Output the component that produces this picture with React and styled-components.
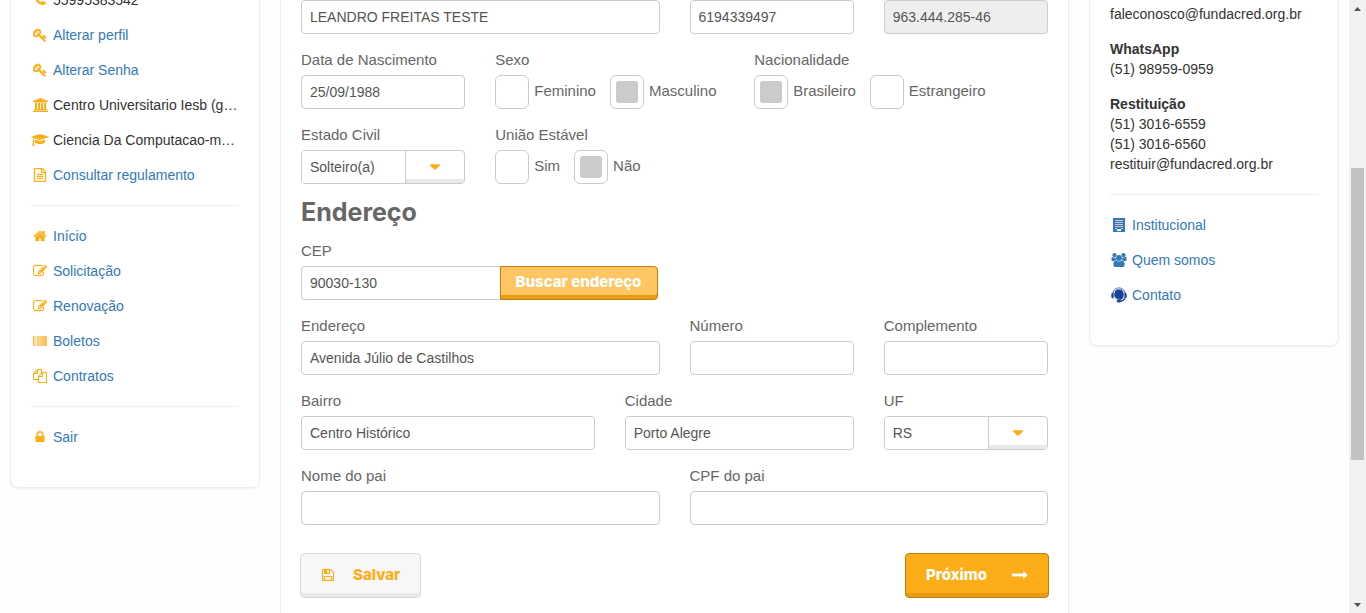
import React from "react";
import styled, { createGlobalStyle, css } from "styled-components";

const GlobalStyle = createGlobalStyle`
  * { box-sizing: border-box; }
  body {
    margin: 0;
    background: #fefefe;
    color: #333;
    font: 14px/20px "Liberation Sans", Arial, sans-serif;
  }
`;

const orange = "#fdad18";
const blue = "#337ab7";

/* ---------- page frame ---------- */
const Frame = styled.div`
  display: flex;
  height: 100vh;
  overflow: hidden;
`;

const Columns = styled.div`
  flex: 1;
  min-width: 0;
  display: grid;
  grid-template-columns: 250px minmax(0, 1fr) 250px;
  gap: 20px;
  align-items: start;
  padding: 0 10px;
`;

const Card = styled.section`
  background: #fff;
  border: 1px solid #eee;
  border-top: 0;
  border-radius: 0 0 8px 8px;
  box-shadow: 0 1px 2px rgba(0, 0, 0, 0.06);
  padding: 0 20px 33px;
`;

const Sidebar = styled(Card).attrs({ as: "aside" })`
  margin-top: -18px;
`;

const ContactCard = styled(Card).attrs({ as: "aside" })`
  padding-top: 4px;
`;

const FormCard = styled(Card).attrs({ as: "main" })`
  min-height: 100vh;
  padding-bottom: 40px;
`;

/* ---------- side menus ---------- */
const Menu = styled.ul`
  list-style: none;
  margin: 0;
  padding: 0;
`;

const MenuItem = styled.li`
  display: flex;
  align-items: center;
  gap: 4px;
  height: 35px;
`;

const IconSlot = styled.span`
  flex: none;
  display: flex;
  justify-content: center;
  width: 18px;
  color: ${(p) => p.$color || orange};
`;

const MenuText = styled.span`
  overflow: hidden;
  text-overflow: ellipsis;
  white-space: nowrap;
`;

const MenuLink = styled.a`
  color: ${blue};
  text-decoration: none;
  white-space: nowrap;
`;

const Divider = styled.hr`
  border: 0;
  border-top: 1px solid #eee;
  margin: ${(p) => p.$top || 13}px 0 12px;
`;

const ContactBlock = styled.address`
  display: flex;
  flex-direction: column;
  font-style: normal;
  & + & { margin-top: 15px; }
`;

/* ---------- form ---------- */
const Grid = styled.div`
  display: grid;
  grid-template-columns: repeat(12, minmax(0, 1fr));
  column-gap: 30px;
  row-gap: 16px;
`;

const Field = styled.div`
  grid-column: auto / span ${(p) => p.$span};
  display: flex;
  flex-direction: column;
  gap: 5px;
  min-width: 0;
`;

const labelText = css`
  color: #666;
  font-size: 15px;
  line-height: 20px;
  white-space: nowrap;
`;

const Label = styled.label`
  ${labelText}
`;

const GroupLabel = styled.span`
  ${labelText}
`;

const Input = styled.input`
  width: 100%;
  min-width: 0;
  height: 34px;
  padding: 0 8px;
  border: 1px solid #ccc;
  border-radius: ${(p) => (p.$joined ? "4px 0 0 4px" : "4px")};
  ${(p) => p.$joined && "border-right: 0;"}
  background: #fff;
  color: #555;
  font: inherit;
  outline: none;
  &:disabled { background: #eee; color: #555; }
`;

const SelectBox = styled.div`
  display: flex;
  height: 34px;
  border: 1px solid #ccc;
  border-radius: 4px;
  overflow: hidden;
`;

const Select = styled.select`
  flex: 1;
  min-width: 0;
  appearance: none;
  border: 0;
  padding: 0 8px;
  background: #fff;
  color: #555;
  font: inherit;
  outline: none;
`;

const SelectArrow = styled.span`
  display: flex;
  align-items: center;
  justify-content: center;
  width: 59px;
  border-left: 1px solid #ccc;
  box-shadow: inset 0 -4px 0 #e9e9e9;
  color: ${orange};
`;

const RadioRow = styled.div`
  display: flex;
  gap: 14px;
`;

const RadioLabel = styled.label`
  display: flex;
  align-items: center;
  gap: 5px;
  height: 34px;
  ${labelText}
`;

const RadioText = styled.span`
  padding-bottom: 2px;
`;

const Radio = styled.input.attrs({ type: "radio" })`
  appearance: none;
  display: flex;
  align-items: center;
  justify-content: center;
  width: 34px;
  height: 34px;
  margin: 0;
  border: 1px solid #ccc;
  border-radius: 6px;
  background: #fff;
  &:checked::after {
    content: "";
    width: 22px;
    height: 22px;
    border-radius: 3px;
    background: #cbcbcb;
  }
`;

const SectionTitle = styled.h2`
  margin: 16px 0;
  color: #666;
  font: 700 25px/25px Inter, sans-serif;
`;

const InputGroup = styled.div`
  display: flex;
  padding-right: 2px;
`;

const ButtonBase = styled.button`
  display: flex;
  align-items: center;
  justify-content: center;
  border-style: solid;
  border-width: 1px;
  font: 800 15px/20px Inter, sans-serif;
  white-space: nowrap;
`;

const SearchButton = styled(ButtonBase)`
  flex: none;
  width: 158px;
  height: 34px;
  padding: 0 0 3px;
  border-color: #bd8012;
  border-radius: 0 4px 4px 0;
  background: #fec561;
  box-shadow: inset 0 -4px 0 #e79c14;
  color: #fff;
`;

const Actions = styled.div`
  display: flex;
  justify-content: space-between;
  margin: 28px -1px 0;
`;

const ActionButton = styled(ButtonBase)`
  height: 45px;
  padding: 0 20px 1px;
  gap: ${(p) => (p.$primary ? 25 : 18)}px;
  border-color: ${(p) => (p.$primary ? "#bd8012" : "#dcdcdc")};
  border-radius: 4px;
  background: ${(p) => (p.$primary ? orange : "#f7f7f7")};
  box-shadow: inset 0 -4px 0 ${(p) => (p.$primary ? "#e79c14" : "#e9e9e9")};
  color: ${(p) => (p.$primary ? "#fff" : orange)};
`;

/* ---------- scrollbar ---------- */
const ScrollBar = styled.div`
  display: flex;
  flex-direction: column;
  width: 17px;
  background: #f1f1f1;
`;

const ScrollEnd = styled.span`
  display: flex;
  align-items: center;
  justify-content: center;
  height: 17px;
  color: #505050;
`;

const ScrollSpace = styled.span`
  flex: ${(p) => p.$share} 0 0;
`;

const ScrollThumb = styled.span`
  flex: 292 0 0;
  margin: 0 2px;
  background: #c1c1c1;
`;

/* ---------- icons: [view box width, path, outline weight] ---------- */
const shapes = {
  phone: [1792, "M1600 1240q0 27-10 70.500t-21 68.500q-21 50-122 106-94 51-186 51-27 0-53-3.500t-57.500-12.500-47-14.500-55.500-20.500-49-18q-98-35-175-83-127-79-264-216t-216-264q-48-77-83-175-3-9-18-49t-20.500-55.500-14.500-47-12.500-57.500-3.500-53q0-92 51-186 56-101 106-122 25-11 68.500-21t70.500-10q14 0 21 3 18 6 53 76 11 19 30 54t35 63.500 31 53.500q3 4 17.500 25t21.500 35.500 7 28.500q0 20-28.500 50t-62 55-62 53-28.500 46q0 9 5 22.500t8.500 20.500 14 24 11.500 19q76 137 174 235t235 174q2 1 19 11.500t24 14 20.500 8.500 22.500 5q18 0 46-28.500t53-62 55-62 50-28.500q14 0 28.500 7t35.500 21.500 25 17.500q25 15 53.500 31t63.500 35 54 30q70 35 76 53 3 7 3 21z", 60],
  key: [1792, "M832 512q0-80-56-136t-136-56-136 56-56 136q0 42 19 83-41-19-83-19-80 0-136 56t-56 136 56 136 136 56 136-56 56-136q0-42-19-83 41 19 83 19 80 0 136-56t56-136zm851 704q0 17-49 66t-66 49q-9 0-28.500-16t-36.500-33-38.500-40-24.500-26l-96 96 220 220q28 28 28 68 0 42-39 81t-81 39q-40 0-68-28l-671-671q-176 131-365 131-163 0-265.500-102.500t-102.500-265.500q0-160 95-313t248-248 313-95q163 0 265.500 102.500t102.500 265.500q0 189-131 365l355 355 96-96q-3-3-26-24.500t-40-38.500-33-36.500-16-28.500q0-17 49-66t66-49q13 0 23 10 6 6 46 44.500t82 79.500 86.500 86 73 78 28.500 41z", 70],
  bank: [1920, "M960 0l960 384v128h-128q0 26-20.500 45t-48.500 19h-1526q-28 0-48.500-19t-20.500-45h-128v-128zm-704 640h256v768h128v-768h256v768h128v-768h256v768h128v-768h256v768h59q28 0 48.500 19t20.500 45v64h-1664v-64q0-26 20.500-45t48.500-19h59v-768zm1595 960q28 0 48.500 19t20.500 45v128h-1920v-128q0-26 20.500-45t48.500-19h1782z", 0],
  cap: [2304, "M1774 836l18 316q4 69-82 128t-235 93.500-323 34.500-323-34.500-235-93.500-82-128l18-316 574 181q22 7 48 7t48-7zm530-324q0 23-22 31l-1120 352q-4 1-10 1t-10-1l-652-206q-43 34-71 111.500t-34 178.500q63 36 63 109 0 69-58 107l58 433q2 14-8 25-9 11-24 11h-192q-15 0-24-11-10-11-8-25l58-433q-58-38-58-107 0-73 65-111 11-207 98-330l-333-104q-22-8-22-31t22-31l1120-352q4-1 10-1t10 1l1120 352q22 8 22 31z", 0],
  file: [1792, "M1596 380q28 28 48 76t20 88v1152q0 40-28 68t-68 28h-1344q-40 0-68-28t-28-68v-1600q0-40 28-68t68-28h896q40 0 88 20t76 48zm-444-244v376h376q-10-29-22-41l-313-313q-12-12-41-22zm384 1528v-1024h-416q-40 0-68-28t-28-68v-416h-768v1536h1280zm-1024-864q0-14 9-23t23-9h704q14 0 23 9t9 23v64q0 14-9 23t-23 9h-704q-14 0-23-9t-9-23v-64zm736 224q14 0 23 9t9 23v64q0 14-9 23t-23 9h-704q-14 0-23-9t-9-23v-64q0-14 9-23t23-9h704zm0 256q14 0 23 9t9 23v64q0 14-9 23t-23 9h-704q-14 0-23-9t-9-23v-64q0-14 9-23t23-9h704z", 40],
  home: [1792, "M1472 992v480q0 26-19 45t-45 19h-384v-384h-256v384h-384q-26 0-45-19t-19-45v-480q0-1 .5-3t.5-3l575-474 575 474q1 2 1 6zm223-69l-62 74q-8 9-21 11h-3q-13 0-21-7l-692-577-692 577q-12 8-24 7-13-2-21-11l-62-74q-8-10-7-23.500t11-21.500l719-599q32-26 76-26t76 26l244 204v-195q0-14 9-23t23-9h192q14 0 23 9t9 23v408l219 182q10 8 11 21.500t-7 23.500z", 40],
  edit: [1792, "M888 1184l116-116-152-152-116 116v56h96v96h56zm440-720q-16-16-33 1l-350 350q-17 17-1 33t33-1l350-350q17-17 1-33zm80 594v190q0 119-84.500 203.500t-203.500 84.500h-832q-119 0-203.500-84.500t-84.500-203.500v-832q0-119 84.500-203.500t203.500-84.500h832q63 0 117 25 15 7 18 23 3 17-9 29l-49 49q-14 14-32 8-23-6-45-6h-832q-66 0-113 47t-47 113v832q0 66 47 113t113 47h832q66 0 113-47t47-113v-126q0-13 9-22l64-64q15-15 35-7t20 29zm-96-738l288 288-672 672h-288v-288zm444 132l-92 92-288-288 92-92q28-28 68-28t68 28l152 152q28 28 28 68t-28 68z", 30],
  barcode: [1792, "M0 256h63v1280h-63zM94 256h32v1280h-32zM189 256h31v1280h-31zM346 256h31v1280h-31zM502 256h62v1280h-62zM659 256h31v1280h-31zM722 256h31v1280h-31zM784 256h31v1280h-31zM942 256h62v1280h-62zM1098 256h63v1280h-63zM1224 256h63v1280h-63zM1349 256h63v1280h-63zM1444 256h63v1280h-63zM1569 256h94v1280h-94zM1695 256h31v1280h-31zM1757 256h35v1280h-35z", 16],
  files: [1792, "M1696 384q40 0 68 28t28 68v1216q0 40-28 68t-68 28h-960q-40 0-68-28t-28-68v-288h-544q-40 0-68-28t-28-68v-672q0-40 20-88t48-76l408-408q28-28 76-48t88-20h416q40 0 68 28t28 68v328q68-40 128-40h416zm-544 213l-299 299h299v-299zm-640-384l-299 299h299v-299zm196 647l316-316v-416h-384v416q0 40-28 68t-68 28h-416v640h512v-256q0-40 20-88t48-76zm956 804v-1152h-384v416q0 40-28 68t-68 28h-416v640h896z", 20],
  lock: [1792, "M640 768h512v-192q0-106-75-181t-181-75-181 75-75 181v192zm832 96v576q0 40-28 68t-68 28h-960q-40 0-68-28t-28-68v-576q0-40 28-68t68-28h32v-192q0-184 132-316t316-132 316 132 132 316v192h32q40 0 68 28t28 68z", 20],
  save: [1792, "M512 1536h768v-384h-768v384zm896 0h128v-896q0-14-10-38.500t-20-34.500l-281-281q-10-10-34-20t-39-10v416q0 40-28 68t-68 28h-576q-40 0-68-28t-28-68v-416h-128v1280h128v-416q0-40 28-68t68-28h832q40 0 68 28t28 68v416zm-384-928v-320q0-13-9.500-22.500t-22.500-9.500h-192q-13 0-22.500 9.500t-9.500 22.500v320q0 13 9.500 22.500t22.500 9.500h192q13 0 22.500-9.500t9.500-22.500zm640 32v928q0 40-28 68t-68 28h-1344q-40 0-68-28t-28-68v-1344q0-40 28-68t68-28h928q40 0 88 20t76 48l280 280q28 28 48 76t20 88z", 20],
  arrow: [1792, "M1728 893q0 14-10 24l-384 354q-16 14-35 6-19-9-19-29v-224h-1248q-14 0-23-9t-9-23v-192q0-14 9-23t23-9h1248v-224q0-21 19-29t35 5l384 350q10 10 10 23z", 40],
  users: [2048, "M657 896q-162 5-265 128h-134q-82 0-138-40.500t-56-118.500q0-353 124-353 6 0 43.500 21t97.500 42.500 119 21.500q67 0 133-23-5 37-5 66 0 159 90 287zm1071 637q0 120-73 189.500t-194 69.500h-874q-121 0-194-69.500t-73-189.500q0-53 3.500-103.500t14-109 26.500-108.500 43-97.500 62-81 85.500-53.500 111.500-20q10 0 43 21.500t73 48 107 48 135 21.500 135-21.500 107-48 73-48 43-21.500q61 0 111.500 20t85.500 53.500 62 81 43 97.500 26.500 108.500 14 109 3.500 103.500zm-1024-1277q0 106-75 181t-181 75-181-75-75-181 75-181 181-75 181 75 75 181zm704 384q0 159-112.500 271.500t-271.500 112.500-271.500-112.500-112.500-271.500 112.500-271.500 271.500-112.500 271.500 112.500 112.500 271.500zm576 225q0 78-56 118.500t-138 40.500h-134q-103-123-265-128 90-128 90-287 0-29-5-66 66 23 133 23 59 0 119-21.500t97.500-42.500 43.500-21q124 0 124 353zm-128-609q0 106-75 181t-181 75-181-75-75-181 75-181 181-75 181 75 75 181z", 20],
};

function Icon({ name, height = 14 }) {
  const [w, d, weight] = shapes[name];
  return (
    <svg
      height={height}
      width={Math.round((w / 1792) * height)}
      viewBox={`0 0 ${w} 1792`}
      fill="currentColor"
      stroke="currentColor"
      strokeWidth={weight}
      aria-hidden="true"
    >
      <path d={d} />
    </svg>
  );
}

const BuildingIcon = () => (
  <svg width="14" height="14" viewBox="0 0 14 14" aria-hidden="true">
    <path fill={blue} d="M1 0h12v14H1z" />
    <path stroke="#e3bfcb" strokeWidth="1" d="M3 2.500h8M3 4.500h8M3 6.500h8M3 8.500h8" />
    <path fill="#e3bfcb" d="M3 10h2v1H3zM9 10h2v1H9z" />
    <path fill="#fff" d="M5 11h4v2H5z" />
  </svg>
);

const HeadsetIcon = () => (
  <svg width="16" height="16" viewBox="0 0 16 16" fill="none" aria-hidden="true">
    <path fill="#1a419a" d="M8 2.200c3.400 0 4.800 2 4.800 5.200 0 3-1.700 5.600-4.800 5.600S3.200 10.400 3.200 7.400C3.200 4.200 4.600 2.200 8 2.200z" />
    <path stroke="#4666ae" strokeWidth="1" d="M1.900 6.500C2.200 3 4.800.9 8 .9s5.800 2.100 6.100 5.600" />
    <path stroke="#dfe5f2" strokeWidth=".6" d="M3 6.500C3.300 3.600 5.300 1.800 8 1.800s4.700 1.800 5 4.700M4 10c1 1.900 2.500 2.300 4.500 2.200" />
    <path fill="#1a419a" d="M.3 7.300c0-.9.900-1.500 2.300-1.500v5.600C1.200 11.400.3 10.700.3 9.800zM15.700 7.300c0-.9-.9-1.500-2.300-1.500v5.600c1.400 0 2.300-.7 2.300-1.600z" />
    <path stroke="#1a419a" strokeWidth="1.200" d="M13.800 11c-.6 1.900-2 3-4.300 3.300" />
    <ellipse cx="8" cy="14.200" rx="2.200" ry="1.400" fill="#1a419a" />
  </svg>
);

const Triangle = ({ width, height, up }) => (
  <svg width={width} height={height} viewBox="0 0 10 5" preserveAspectRatio="none" fill="currentColor" aria-hidden="true">
    <path d={up ? "M5 0L10 5H0z" : "M0 0h10L5 5z"} />
  </svg>
);

const Caret = () => (
  <svg width="10" height="6" viewBox="0 0 11 6" fill="currentColor" aria-hidden="true">
    <path d="M1 0h9q1 0 1 1 0 .4-.3.700L6.200 5.700q-.7.6-1.400 0L.3 1.700Q0 1.400 0 1q0-1 1-1z" />
  </svg>
);

function Item({ icon, text, href }) {
  return (
    <MenuItem>
      <IconSlot><Icon name={icon} /></IconSlot>
      {href ? <MenuLink href={href}>{text}</MenuLink> : <MenuText>{text}</MenuText>}
    </MenuItem>
  );
}

function TextField({ id, label, span, value = "" }) {
  return (
    <Field $span={span}>
      <Label htmlFor={id}>{label}</Label>
      <Input id={id} defaultValue={value} />
    </Field>
  );
}

function SelectField({ id, label, span, value }) {
  return (
    <Field $span={span}>
      <Label htmlFor={id}>{label}</Label>
      <SelectBox>
        <Select id={id} defaultValue={value}><option>{value}</option></Select>
        <SelectArrow><Caret /></SelectArrow>
      </SelectBox>
    </Field>
  );
}

function RadioField({ name, label, span, options, value }) {
  return (
    <Field $span={span} role="radiogroup" aria-labelledby={name}>
      <GroupLabel id={name}>{label}</GroupLabel>
      <RadioRow>
        {options.map((o) => (
          <RadioLabel key={o}>
            <Radio name={name} defaultChecked={o === value} />
            <RadioText>{o}</RadioText>
          </RadioLabel>
        ))}
      </RadioRow>
    </Field>
  );
}

export default function App() {
  return (
    <Frame>
      <GlobalStyle />
      <Columns>
        <Sidebar>
          <Menu>
            <Item icon="phone" text="55995383542" />
            <Item icon="key" text="Alterar perfil" href="#perfil" />
            <Item icon="key" text="Alterar Senha" href="#senha" />
            <Item icon="bank" text="Centro Universitario Iesb (graduacao)" />
            <Item icon="cap" text="Ciencia Da Computacao-matutino" />
            <Item icon="file" text="Consultar regulamento" href="#regulamento" />
          </Menu>
          <Divider />
          <Menu>
            <Item icon="home" text="Início" href="#inicio" />
            <Item icon="edit" text="Solicitação" href="#solicitacao" />
            <Item icon="edit" text="Renovação" href="#renovacao" />
            <Item icon="barcode" text="Boletos" href="#boletos" />
            <Item icon="files" text="Contratos" href="#contratos" />
          </Menu>
          <Divider />
          <Menu>
            <Item icon="lock" text="Sair" href="#sair" />
          </Menu>
        </Sidebar>

        <FormCard>
          <form onSubmit={(e) => e.preventDefault()}>
            <Grid>
              <Field $span={6}><Input aria-label="Nome" defaultValue="LEANDRO FREITAS TESTE" /></Field>
              <Field $span={3}><Input aria-label="RG" defaultValue="6194339497" /></Field>
              <Field $span={3}><Input aria-label="CPF" defaultValue="963.444.285-46" disabled /></Field>

              <TextField id="nascimento" label="Data de Nascimento" span={3} value="25/09/1988" />
              <RadioField name="sexo" label="Sexo" span={4} options={["Feminino", "Masculino"]} value="Masculino" />
              <RadioField name="nacionalidade" label="Nacionalidade" span={5} options={["Brasileiro", "Estrangeiro"]} value="Brasileiro" />

              <SelectField id="civil" label="Estado Civil" span={3} value="Solteiro(a)" />
              <RadioField name="uniao" label="União Estável" span={9} options={["Sim", "Não"]} value="Não" />
            </Grid>

            <SectionTitle>Endereço</SectionTitle>

            <Grid>
              <Field $span={6}>
                <Label htmlFor="cep">CEP</Label>
                <InputGroup>
                  <Input id="cep" defaultValue="90030-130" $joined />
                  <SearchButton type="button">Buscar endereço</SearchButton>
                </InputGroup>
              </Field>

              <Field $span={6} />
              <TextField id="endereco" label="Endereço" span={6} value="Avenida Júlio de Castilhos" />
              <TextField id="numero" label="Número" span={3} />
              <TextField id="complemento" label="Complemento" span={3} />

              <TextField id="bairro" label="Bairro" span={5} value="Centro Histórico" />
              <TextField id="cidade" label="Cidade" span={4} value="Porto Alegre" />
              <SelectField id="uf" label="UF" span={3} value="RS" />

              <TextField id="pai" label="Nome do pai" span={6} />
              <TextField id="cpfpai" label="CPF do pai" span={6} />
            </Grid>

            <Actions>
              <ActionButton type="button"><Icon name="save" />Salvar</ActionButton>
              <ActionButton type="submit" $primary>Próximo<Icon name="arrow" height={16} /></ActionButton>
            </Actions>
          </form>
        </FormCard>

        <ContactCard>
          <ContactBlock>
            <span>faleconosco@fundacred.org.br</span>
          </ContactBlock>
          <ContactBlock>
            <strong>WhatsApp</strong>
            <span>(51) 98959-0959</span>
          </ContactBlock>
          <ContactBlock>
            <strong>Restituição</strong>
            <span>(51) 3016-6559</span>
            <span>(51) 3016-6560</span>
            <span>restituir@fundacred.org.br</span>
          </ContactBlock>
          <Divider $top={20} />
          <Menu>
            <MenuItem>
              <IconSlot><BuildingIcon /></IconSlot>
              <MenuLink href="#institucional">Institucional</MenuLink>
            </MenuItem>
            <MenuItem>
              <IconSlot $color={blue}><Icon name="users" /></IconSlot>
              <MenuLink href="#quem-somos">Quem somos</MenuLink>
            </MenuItem>
            <MenuItem>
              <IconSlot><HeadsetIcon /></IconSlot>
              <MenuLink href="#contato">Contato</MenuLink>
            </MenuItem>
          </Menu>
        </ContactCard>
      </Columns>

      <ScrollBar aria-hidden="true">
        <ScrollEnd><Triangle width={7} height={4} up /></ScrollEnd>
        <ScrollSpace $share={151} />
        <ScrollThumb />
        <ScrollSpace $share={136} />
        <ScrollEnd><Triangle width={7} height={4} /></ScrollEnd>
      </ScrollBar>
    </Frame>
  );
}
